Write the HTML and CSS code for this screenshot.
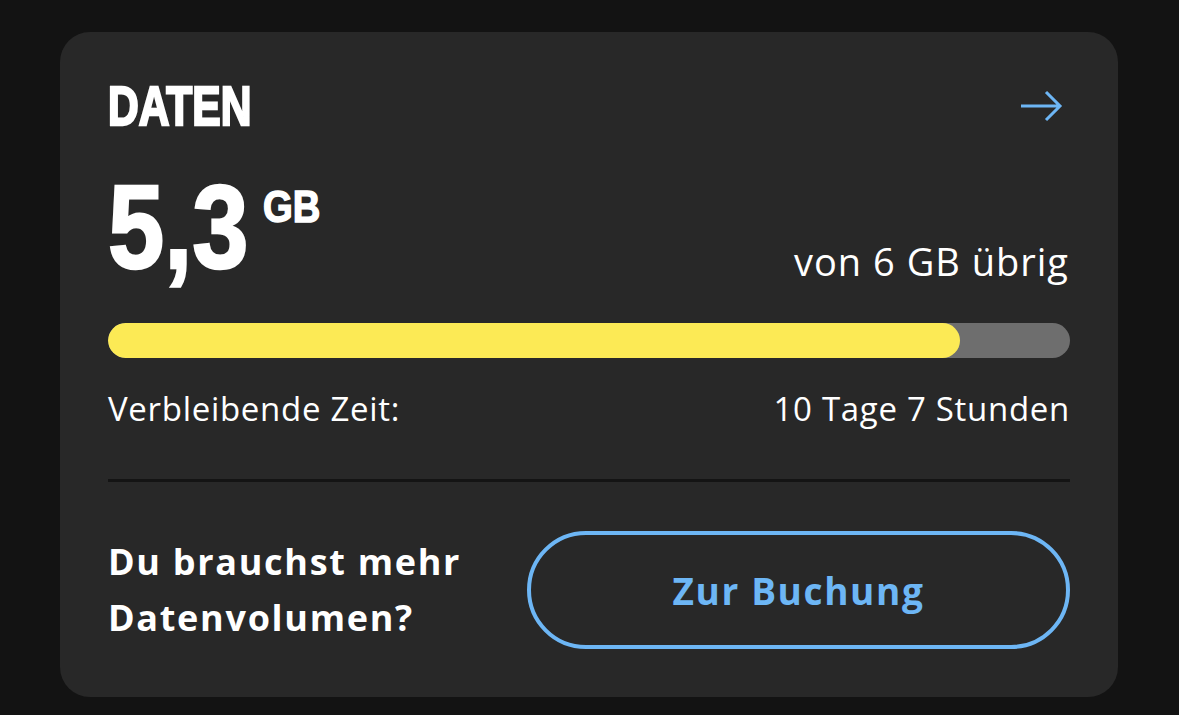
FILE: index.html
```html
<!DOCTYPE html>
<html lang="de">
<head>
<meta charset="utf-8">
<title>Daten</title>
<link rel="stylesheet" href="styles.css">
</head>
<body>
<section class="card">
  <header class="card-head">
    <h2 class="title">DATEN</h2>
    <svg class="arrow" width="44" height="34" viewBox="0 0 44 34" aria-hidden="true">
      <path d="M2 17 H41 M27 3 L41 17 L27 31" fill="none" stroke="#6db6f5" stroke-width="3" stroke-linecap="butt" stroke-linejoin="miter"/>
    </svg>
  </header>
  <div class="amount-row">
    <div class="amount"><span class="amount-num">5,3</span><span class="amount-unit">GB</span></div>
    <div class="amount-total">von 6 GB übrig</div>
  </div>
  <div class="bar"><div class="bar-fill" style="width: 88.6%"></div></div>
  <div class="time-row">
    <span>Verbleibende Zeit:</span>
    <span>10 Tage 7 Stunden</span>
  </div>
  <hr class="divider">
  <div class="cta-row">
    <p class="cta-text">Du brauchst mehr<br>Datenvolumen?</p>
    <button class="cta-btn" type="button">Zur Buchung</button>
  </div>
</section>
</body>
</html>
```
FILE: styles.css
```css
* { box-sizing: border-box; }
html, body { margin: 0; padding: 0; }
body {
  background: #131313;
  padding: 32px 61px 0 60px;
  font-family: "Open Sans", Lato, sans-serif;
  color: #fff;
}
.card {
  background: #282828;
  border-radius: 30px;
  padding: 46px 48px 48px 48px;
  width: 1058px;
}
.card-head {
  display: flex;
  justify-content: space-between;
  align-items: center;
}
.title {
  margin: 0;
  font-family: "Liberation Sans", Arial, sans-serif;
  font-weight: 700;
  font-size: 56px;
  line-height: 56px;
  display: inline-block;
  transform: scaleX(0.76);
  transform-origin: left center;
  -webkit-text-stroke: 2.5px #fff;
}
.arrow { margin-right: 7px; display: block; }
.amount-row {
  margin-top: 33px;
  display: flex;
  justify-content: space-between;
  align-items: flex-end;
}
.amount {
  display: flex;
  align-items: flex-start;
  font-family: "Liberation Sans", Arial, sans-serif;
  font-weight: 700;
}
.amount-num {
  display: inline-block;
  font-size: 119px;
  line-height: 119px;
  transform: scaleX(0.85);
  transform-origin: left center;
  -webkit-text-stroke: 2.5px #fff;
}
.amount-unit {
  display: inline-block;
  font-size: 45px;
  line-height: 45px;
  margin-top: 17px;
  margin-left: -10px;
  transform: scaleX(0.85);
  transform-origin: left center;
  -webkit-text-stroke: 1.5px #fff;
}
.amount-total {
  font-size: 38px;
  line-height: 36px;
  letter-spacing: 1px;
  margin-bottom: 7px;
  margin-right: 1px;
}
.bar {
  margin-top: 37px;
  height: 35px;
  border-radius: 18px;
  background: #6e6e6e;
  overflow: hidden;
}
.bar-fill {
  height: 100%;
  background: #fcea55;
  border-radius: 18px;
}
.time-row {
  margin-top: 34px;
  display: flex;
  justify-content: space-between;
  font-size: 33px;
  line-height: 34px;
  letter-spacing: 0.7px;
}
.divider {
  margin: 53px 0 0 0;
  border: 0;
  height: 3px;
  background: #141414;
}
.cta-row {
  margin-top: 49px;
  display: flex;
  justify-content: space-between;
  align-items: center;
}
.cta-text {
  margin: 0;
  font-weight: 700;
  font-size: 36px;
  line-height: 56px;
  letter-spacing: 1.7px;
}
.cta-btn {
  width: 543px;
  height: 118px;
  border: 4px solid #6db6f5;
  border-radius: 59px;
  background: transparent;
  color: #6db6f5;
  font-family: "Open Sans", Lato, sans-serif;
  font-weight: 700;
  font-size: 37px;
  letter-spacing: 1.6px;
  padding: 0;
}
```
